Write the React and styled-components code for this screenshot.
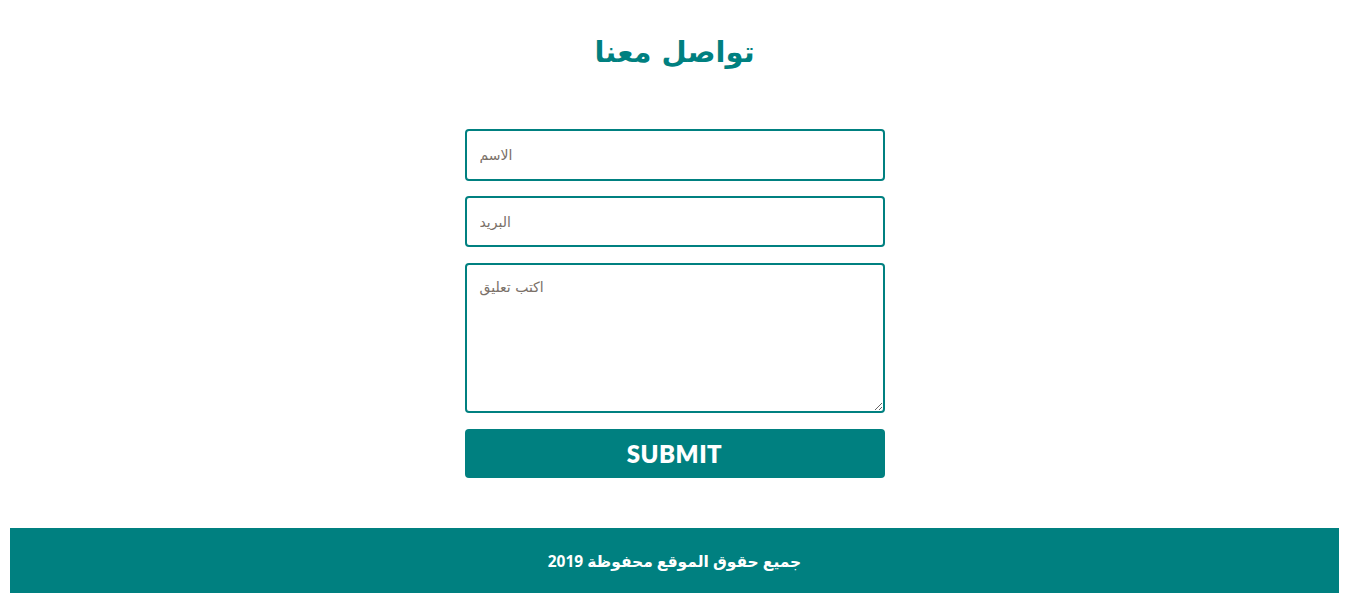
import React from "react";
import styled, { createGlobalStyle } from "styled-components";

const Global = createGlobalStyle`
  html, body { margin: 0; padding: 0; background: #fff; }
  body { font-family: "Liberation Sans", Arial, sans-serif; }
  * { box-sizing: border-box; }
`;

const Page = styled.div`
  display: flex;
  flex-direction: column;
  align-items: center;
  padding: 0 9px 6px 10px;
`;

const Title = styled.h1`
  margin: 30px 0 0;
  height: 44px;
  line-height: 44px;
  font-size: 29px;
  font-weight: bold;
  color: #008080;
  font-family: "DejaVu Sans", sans-serif;
`;

const Form = styled.form`
  margin-top: 55px;
  width: 420px;
  display: flex;
  flex-direction: column;
  gap: 15px;
`;

const Input = styled.input`
  width: 100%;
  height: ${(p) => p.$h}px;
  border: 2px solid #008080;
  border-radius: 4px;
  padding: 0 13px;
  font-size: 14px;
  font-family: "DejaVu Sans", sans-serif;
  outline: none;
  &::placeholder { color: #7a7068; }
`;

const TextArea = styled.textarea`
  width: 100%;
  height: 150px;
  margin-top: 1px;
  border: 2px solid #008080;
  border-radius: 4px;
  padding: 14px 13px;
  font-size: 14px;
  font-family: "DejaVu Sans", sans-serif;
  outline: none;
  display: block;
  &::placeholder { color: #7a7068; }
`;

const Submit = styled.button`
  margin-top: 1px;
  width: 100%;
  height: 49px;
  border: none;
  border-radius: 4px;
  background: #008080;
  color: #fff;
  font-family: "Lato", "Open Sans", sans-serif;
  font-weight: 800;
  font-size: 24px;
  letter-spacing: 0.5px;
  cursor: pointer;
`;

const Footer = styled.footer`
  margin-top: 50px;
  align-self: stretch;
  height: 65px;
  background: #008080;
  color: #fff;
  display: flex;
  align-items: center;
  justify-content: center;
  font-family: "Noto Sans", "DejaVu Sans", sans-serif;
  font-weight: bold;
  font-size: 15.5px;
`;

export default function App() {
  return (
    <>
      <Global />
      <Page>
        <Title>تواصل معنا</Title>
        <Form onSubmit={(e) => e.preventDefault()}>
          <Input $h={52} placeholder="الاسم" />
          <Input $h={51} placeholder="البريد" />
          <TextArea placeholder="اكتب تعليق" />
          <Submit type="submit">SUBMIT</Submit>
        </Form>
        <Footer>جميع حقوق الموقع محفوظة 2019</Footer>
      </Page>
    </>
  );
}
